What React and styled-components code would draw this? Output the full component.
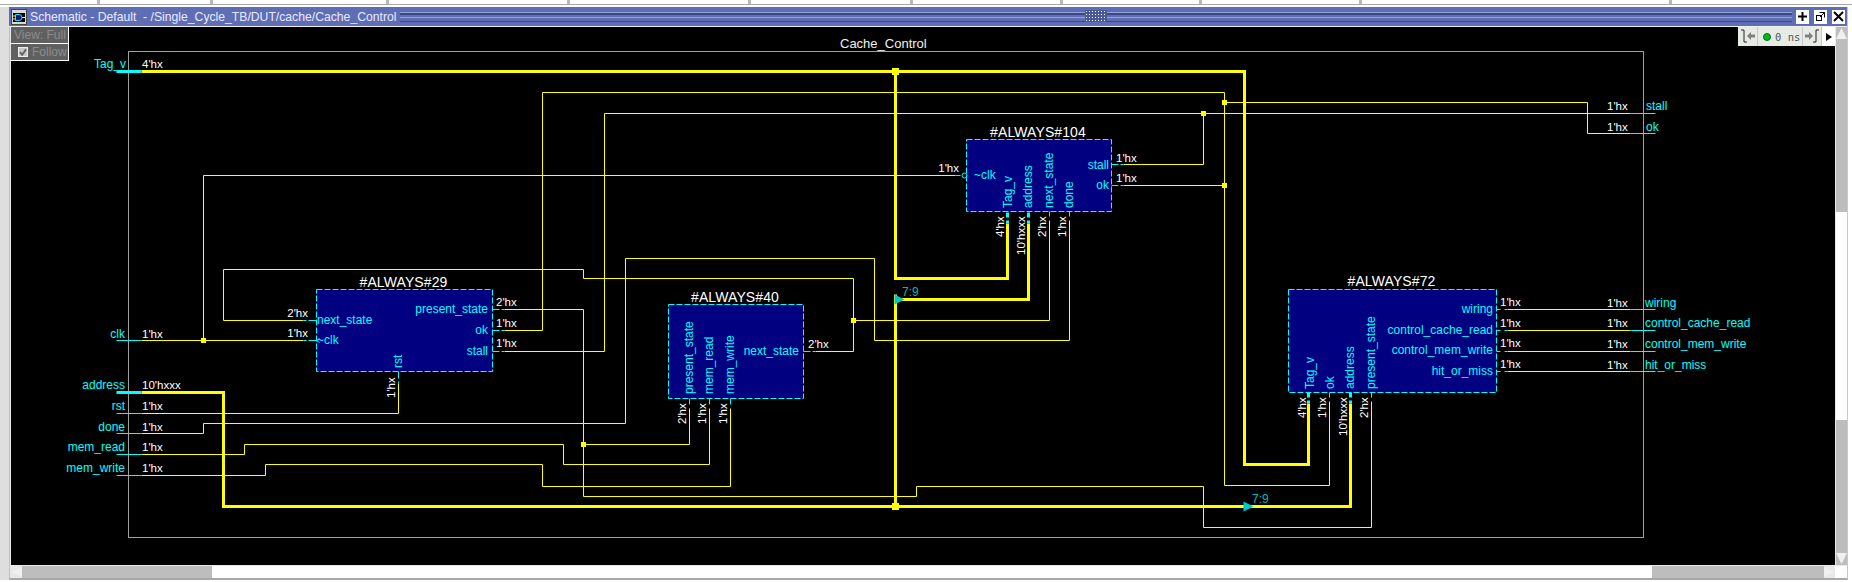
import styled, { createGlobalStyle } from "styled-components";

const GlobalStyle = createGlobalStyle`
  html, body {
    margin: 0;
    padding: 0;
    background: #fff;
  }
`;

// wire routes, in page pixels
const thinWires = [
  "M141 340H303",
  "M203 340V175H955",
  "M303 320H223V269H583V278H853V351H815",
  "M853 320H1049V220",
  "M141 433H203V423H625V258H874V340H1069V220",
  "M504 309H583V496H916V486H1203V527H1371V401",
  "M583 444H689V408",
  "M141 454H244V444H563V464H709V408",
  "M141 475H265V464H542V486H730V408",
  "M141 413H398V383",
  "M504 330H542V92H1224V485H1329V401",
  "M1224 102H1587V133H1630",
  "M504 351H604V113H1630",
  "M1123 164H1203V113",
  "M1123 185H1224",
  "M1507 309H1630",
  "M1507 330H1630",
  "M1507 351H1630",
  "M1507 371H1630",
];

const busWires = [
  "M141 71H1244V464H1308V403",
  "M895 71V278H1007V223",
  "M895 294V506",
  "M895 299H1028V223",
  "M141 392H223V506H1350V403",
];

const thinStubs = [
  "M116 340H141", "M116 413H141", "M116 433H141", "M116 454H141", "M116 475H141",
  "M1630 113H1655", "M1630 133H1655",
  "M1630 309H1655", "M1630 330H1655", "M1630 351H1655", "M1630 371H1655",
  // #29
  "M303 320H306M308 320H316", "M303 340H306M308 340H316",
  "M492 309H499M501 309H504", "M492 330H499M501 330H504", "M492 351H499M501 351H504",
  "M398 371V378M398 381V383",
  // #40
  "M689 398V404", "M709 398V404", "M730 398V404",
  "M803 351H810M812 351H815",
  // #104
  "M1049 211V216", "M1069 211V216",
  "M1111 164H1118M1120 164H1123", "M1111 185H1118M1120 185H1123",
  "M955 175H960",
  // #72
  "M1329 392V397", "M1371 392V397",
  "M1496 309H1500M1504 309H1507", "M1496 330H1500M1504 330H1507",
  "M1496 351H1500M1504 351H1507", "M1496 371H1500M1504 371H1507",
];

const busStubs = [
  "M116 71H141", "M116 392H141",
  "M1007 212V217M1007 220V223", "M1028 212V217M1028 220V223",
  "M1308 392V397M1308 400V403", "M1350 392V397M1350 400V403",
];

const nodes = [
  [203, 340, 5], [853, 320, 5], [583, 444, 5], [1224, 102, 5],
  [1203, 113, 5], [1224, 185, 5], [895, 71, 7], [895, 506, 7],
];

const blocks = [
  { name: "#ALWAYS#29", x: 316, y: 289, w: 176, h: 82, ty: 286 },
  { name: "#ALWAYS#40", x: 668, y: 304, w: 135, h: 94, ty: 301 },
  { name: "#ALWAYS#104", x: 966, y: 139, w: 145, h: 72, ty: 136 },
  { name: "#ALWAYS#72", x: 1288, y: 289, w: 208, h: 103, ty: 285 },
];

// [text, x, baseline, anchor end?]
const signalLabels = [
  ["Tag_v", 126, 68, 1], ["clk", 125, 338, 1], ["address", 125, 389, 1], ["rst", 125, 410, 1],
  ["done", 125, 431, 1], ["mem_read", 125, 451, 1], ["mem_write", 125, 472, 1],
  ["stall", 1646, 110], ["ok", 1646, 131],
  ["wiring", 1645, 307], ["control_cache_read", 1645, 327],
  ["control_mem_write", 1645, 348], ["hit_or_miss", 1645, 369],
  ["next_state", 317, 324], ["~clk", 317, 344],
  ["present_state", 488, 313, 1], ["ok", 488, 334, 1], ["stall", 488, 355, 1],
  ["next_state", 799, 355, 1],
  ["~clk", 974, 179], ["stall", 1109, 169, 1], ["ok", 1109, 189, 1],
  ["wiring", 1493, 313, 1], ["control_cache_read", 1493, 334, 1],
  ["control_mem_write", 1493, 354, 1], ["hit_or_miss", 1493, 375, 1],
];

const signalLabelsUp = [
  ["rst", 402, 368],
  ["present_state", 693, 394], ["mem_read", 713, 394], ["mem_write", 734, 394],
  ["Tag_v", 1012, 208], ["address", 1032, 208], ["next_state", 1053, 208], ["done", 1073, 208],
  ["Tag_v", 1314, 389], ["ok", 1334, 389], ["address", 1354, 389], ["present_state", 1375, 389],
];

const values = [
  ["4'hx", 142, 68], ["1'hx", 142, 338], ["10'hxxx", 142, 389], ["1'hx", 142, 410],
  ["1'hx", 142, 431], ["1'hx", 142, 451], ["1'hx", 142, 472],
  ["2'hx", 308, 317, 1], ["1'hx", 308, 337, 1],
  ["2'hx", 496, 306], ["1'hx", 496, 327], ["1'hx", 496, 347],
  ["2'hx", 808, 348],
  ["1'hx", 959, 172, 1], ["1'hx", 1116, 162], ["1'hx", 1116, 182],
  ["1'hx", 1500, 306], ["1'hx", 1500, 327], ["1'hx", 1500, 347], ["1'hx", 1500, 368],
  ["1'hx", 1607, 307], ["1'hx", 1607, 327], ["1'hx", 1607, 348], ["1'hx", 1607, 369],
  ["1'hx", 1607, 110], ["1'hx", 1607, 131],
];

const valuesUp = [
  ["1'hx", 395, 398],
  ["2'hx", 686, 424], ["1'hx", 706, 424], ["1'hx", 727, 424],
  ["4'hx", 1004, 237], ["10'hxxx", 1025, 255], ["2'hx", 1046, 237], ["1'hx", 1066, 237],
  ["4'hx", 1306, 418], ["1'hx", 1326, 418], ["10'hxxx", 1347, 436], ["2'hx", 1368, 418],
];

const tabSplits = [100, 113, 176, 181, 181, 162, 150, 139, 160, 310];

export default function App() {
  return (
    <Page>
      <GlobalStyle />
      <TabStrip>
        {tabSplits.map((w, i) => (
          <TabCell key={i} $w={w} />
        ))}
      </TabStrip>
      <Window>
        <TitleBar>
          <WindowIcon viewBox="0 0 16 16">
            <rect x="0.5" y="0.5" width="15" height="15" fill="#d8d8d8" stroke="#444" />
            <rect x="2" y="4" width="12" height="9" fill="#000" />
            <path d="M4.5 5.5H8Q11 5.5 11 8.5T8 11.5H4.5Z" fill="#0a1a80" stroke="#19e6e6" />
            <path d="M2 7H4.5M2 10H4.5M11 8.5H14" stroke="#ffff00" fill="none" />
          </WindowIcon>
          <TitleText>Schematic - Default  - /Single_Cycle_TB/DUT/cache/Cache_Control</TitleText>
          <Grip>
            <GripDots />
          </Grip>
          <WinButtons>
            <WinButton>
              <svg width="11" height="11" viewBox="0 0 11 11">
                <path d="M5.5 1V10M1 5.5H10" stroke="#000" strokeWidth="2" />
              </svg>
            </WinButton>
            <WinButton>
              <svg width="11" height="11" viewBox="0 0 11 11" fill="none" stroke="#000">
                <rect x="1.5" y="4.5" width="5" height="5" />
                <path d="M4.5 1.5H9.5V6.5M9.5 1.5L5 6" />
              </svg>
            </WinButton>
            <WinButton>
              <svg width="11" height="11" viewBox="0 0 11 11">
                <path d="M1 1L10 10M10 1L1 10" stroke="#000" strokeWidth="2" />
              </svg>
            </WinButton>
          </WinButtons>
        </TitleBar>
        <Body>
          <Canvas>
            <Schematic viewBox="11 27 1824 538">
              <g transform="translate(0.5 0.5)">
                <rect x="128" y="51" width="1515" height="486" fill="none" stroke="#a0a0a0" />
                {blocks.map((b) => (
                  <g key={b.name}>
                    <rect x={b.x} y={b.y} width={b.w} height={b.h} fill="#000080" stroke="#00ffff" strokeDasharray="6 2" />
                    <BlockTitle x={b.x + b.w / 2 - 1} y={b.ty} textAnchor="middle">{b.name}</BlockTitle>
                  </g>
                ))}
                <path d={thinWires.join("")} fill="none" stroke="#ffff00" />
                <path d={busWires.join("")} fill="none" stroke="#ffff00" strokeWidth="3" />
                <path d={thinStubs.join("")} fill="none" stroke="#00ffff" />
                <path d={busStubs.join("")} fill="none" stroke="#00ffff" strokeWidth="3" />
                <circle cx="964" cy="175" r="2.5" fill="none" stroke="#00ffff" />
                <path d="M316 340l3 -2M316 340l3 2" stroke="#00ffff" fill="none" />
                <path d="M894 294L904 299L894 304Z" fill="#00c8c8" />
                <path d="M1243 501L1253 506L1243 511Z" fill="#00c8c8" />
              </g>
              {nodes.map(([x, y, s]) => (
                <rect key={`${x}-${y}`} x={x + 0.5 - s / 2} y={y + 0.5 - s / 2} width={s} height={s} fill="#ffff00" />
              ))}
              <RangeLabel x="902" y="296">7:9</RangeLabel>
              <RangeLabel x="1252" y="503">7:9</RangeLabel>
              <ModuleName x="840" y="48">Cache_Control</ModuleName>
              {signalLabels.map(([t, x, y, end]) => (
                <SignalText key={`${t}-${x}-${y}`} x={x} y={y} textAnchor={end ? "end" : "start"}>{t}</SignalText>
              ))}
              {signalLabelsUp.map(([t, x, y]) => (
                <SignalText key={`${t}-${x}-${y}`} x={x} y={y} transform={`rotate(-90 ${x} ${y})`}>{t}</SignalText>
              ))}
              {values.map(([t, x, y, end]) => (
                <ValueText key={`${t}-${x}-${y}`} x={x} y={y} textAnchor={end ? "end" : "start"}>{t}</ValueText>
              ))}
              {valuesUp.map(([t, x, y]) => (
                <ValueText key={`${t}-${x}-${y}`} x={x} y={y} transform={`rotate(-90 ${x} ${y})`}>{t}</ValueText>
              ))}
            </Schematic>
            <ViewControls>
              <ViewBox>View: Full</ViewBox>
              <ViewBox>
                <CheckBox>
                  <svg width="9" height="9" viewBox="0 0 9 9">
                    <path d="M1 4L3.5 7L8 1" stroke="#606060" strokeWidth="2" fill="none" />
                  </svg>
                </CheckBox>
                Follow
              </ViewBox>
            </ViewControls>
            <TimeBar>
              <TimeButton>
                <svg width="15" height="15" viewBox="0 0 15 15" fill="none">
                  <path d="M1 1H4V13H7" stroke="#222" />
                  <path d="M7 7L11 3V5.5H15V8.5H11V11Z" fill="#808080" />
                </svg>
              </TimeButton>
              <TimeReadout>
                <GreenDot />
                0 ns
              </TimeReadout>
              <TimeButton>
                <svg width="15" height="15" viewBox="0 0 15 15" fill="none">
                  <path d="M14 1H11V13H8" stroke="#222" />
                  <path d="M8 7L4 3V5.5H0V8.5H4V11Z" fill="#808080" />
                </svg>
              </TimeButton>
              <MoreButton />
            </TimeBar>
          </Canvas>
          <VScroll>
            <ScrollArrow viewBox="0 0 11 12">
              <path d="M5.5 1L11 12H0Z" fill="#f0f0f0" />
            </ScrollArrow>
            <VTrack $h={173} />
            <VThumb />
            <VTrack $fill />
            <ScrollArrow viewBox="0 0 11 12">
              <path d="M5.5 11L11 0H0Z" fill="#f0f0f0" />
            </ScrollArrow>
          </VScroll>
        </Body>
        <HScroll>
          <ScrollArrow viewBox="0 0 12 11">
            <path d="M1 5.5L12 0V11Z" fill="#f0f0f0" />
          </ScrollArrow>
          <HTrack $w={190} />
          <HThumb />
          <HTrack $fill />
          <ScrollArrow viewBox="0 0 12 11">
            <path d="M11 5.5L0 0V11Z" fill="#f0f0f0" />
          </ScrollArrow>
          <Corner />
        </HScroll>
      </Window>
    </Page>
  );
}

const Page = styled.div`
  width: 1852px;
  height: 582px;
  overflow: hidden;
  background: #fff;
  font-family: "Liberation Sans", Arial, sans-serif;
`;

const TabStrip = styled.div`
  display: flex;
  height: 4px;
  border-bottom: 1px solid #a8a8a8;
  margin-bottom: 2px;
`;

const TabCell = styled.div`
  width: ${(p) => p.$w}px;
  box-sizing: border-box;
  flex: none;
  background: #fff;
  border-right: 3px solid #b8b8b8;
`;

const Window = styled.div`
  margin-left: 9px;
  margin-right: 4px;
  height: 573px;
  box-sizing: border-box;
  background: #e8e8e8;
  border-left: 1px solid #c0c0c0;
  border-bottom: 2px solid #a8a8a8;
  border-right: 1px solid #c8c8c8;
  box-shadow: -9px 0 0 #dedede;
  display: flex;
  flex-direction: column;
`;

const TitleBar = styled.div`
  height: 19px;
  flex: none;
  display: flex;
  align-items: center;
  background: #5f6eb4;
  border-bottom: 1px solid #f0f0f0;
  margin-left: -1px;
  padding-left: 2px;
`;

const WindowIcon = styled.svg`
  width: 16px;
  height: 16px;
  flex: none;
`;

const TitleText = styled.span`
  margin-left: 3px;
  font-size: 12.2px;
  color: #e8eaff;
  white-space: pre;
  flex: none;
`;

const Grip = styled.div`
  flex: 1;
  height: 8px;
  margin: 0 4px 0 4px;
  position: relative;
  border-top: 1px solid #93a0e0;
  border-bottom: 1px solid #3c4880;
  background: linear-gradient(#3c4880 0 2px, transparent 2px 4px, #93a0e0 4px 5px, transparent 5px);
`;

const GripDots = styled.div`
  position: absolute;
  left: 685px;
  top: -3px;
  width: 22px;
  height: 12px;
  background-color: #4a5898;
  background-image: radial-gradient(#fff 0.6px, transparent 0.8px);
  background-size: 3px 3px;
`;

const WinButtons = styled.div`
  display: flex;
  gap: 5px;
  padding-right: 2px;
`;

const WinButton = styled.div`
  width: 13px;
  height: 14px;
  background: #fff;
  display: flex;
  align-items: center;
  justify-content: center;
`;

const Body = styled.div`
  flex: 1;
  min-height: 0;
  display: flex;
  padding-left: 1px;
`;

const Canvas = styled.div`
  width: 1824px;
  height: 538px;
  flex: none;
  position: relative;
  background: #000;
`;

const Schematic = styled.svg`
  display: block;
  width: 1824px;
  height: 538px;
`;

const SignalText = styled.text`
  font: 12px "Liberation Sans", Arial, sans-serif;
  fill: #00ffff;
`;

const ValueText = styled.text`
  font: 11.5px "Liberation Sans", Arial, sans-serif;
  fill: #fff;
`;

const BlockTitle = styled.text`
  font: 14px "Liberation Sans", Arial, sans-serif;
  letter-spacing: 0.1px;
  fill: #fff;
`;

const ModuleName = styled.text`
  font: 13px "Liberation Sans", Arial, sans-serif;
  fill: #f0f0f0;
`;

const RangeLabel = styled.text`
  font: 12px "Liberation Sans", Arial, sans-serif;
  fill: #00b8b8;
`;

const ViewControls = styled.div`
  position: absolute;
  left: 0;
  top: 0;
  width: 58px;
  display: flex;
  flex-direction: column;
`;

const ViewBox = styled.div`
  height: 17px;
  box-sizing: border-box;
  display: flex;
  align-items: center;
  gap: 4px;
  padding-left: 3px;
  background: #606060;
  color: #8c8c8c;
  font-size: 12px;
  white-space: nowrap;
  border-right: 1px solid #fff;
  border-bottom: 1px solid #fff;
`;

const CheckBox = styled.span`
  width: 10px;
  height: 10px;
  margin-left: 4px;
  background: #c8c8c8;
  border: 1px solid #eee;
  display: flex;
  align-items: center;
  justify-content: center;
  box-sizing: border-box;
`;

const TimeBar = styled.div`
  position: absolute;
  right: 0;
  top: 0;
  height: 19px;
  display: flex;
  gap: 1px;
  background: #c8c8c8;
`;

const TimeButton = styled.div`
  width: 18px;
  background: #e6ece4;
  display: flex;
  align-items: center;
  justify-content: center;

  &:first-child {
    width: 19px;
  }
`;

const TimeReadout = styled.div`
  width: 44px;
  display: flex;
  align-items: center;
  gap: 4px;
  padding-left: 5px;
  box-sizing: border-box;
  background: #e6ece4;
  color: #555;
  font: 10.5px "DejaVu Sans Mono", monospace;
  white-space: nowrap;
`;

const GreenDot = styled.span`
  width: 8px;
  height: 8px;
  flex: none;
  border-radius: 50%;
  background: #00c000;
  border: 1px solid #064;
  box-sizing: border-box;
`;

const MoreButton = styled.div`
  width: 13px;
  background: #fff;
  position: relative;

  &::after {
    content: "";
    position: absolute;
    left: 4px;
    top: 6px;
    border-left: 6px solid #000;
    border-top: 4px solid transparent;
    border-bottom: 4px solid transparent;
  }
`;

const VScroll = styled.div`
  width: 11px;
  height: 538px;
  flex: none;
  margin-left: 1px;
  display: flex;
  flex-direction: column;
  background: #bdbdbd;
`;

const ScrollArrow = styled.svg`
  width: 11px;
  height: 12px;
  flex: none;
  display: block;
`;

const VTrack = styled.div`
  height: ${(p) => (p.$h ? `${p.$h}px` : "auto")};
  flex: ${(p) => (p.$fill ? 1 : "none")};
`;

const VThumb = styled.div`
  height: 208px;
  flex: none;
  background: #fff;
`;

const HScroll = styled.div`
  height: 12px;
  flex: none;
  display: flex;
  padding-left: 1px;
`;

const HTrack = styled.div`
  background: #bdbdbd;
  width: ${(p) => (p.$w ? `${p.$w}px` : "auto")};
  flex: ${(p) => (p.$fill ? 1 : "none")};
`;

const HThumb = styled.div`
  width: 1440px;
  flex: none;
  background: #fff;
`;

const Corner = styled.div`
  width: 12px;
  flex: none;
  background: #fff;
`;
